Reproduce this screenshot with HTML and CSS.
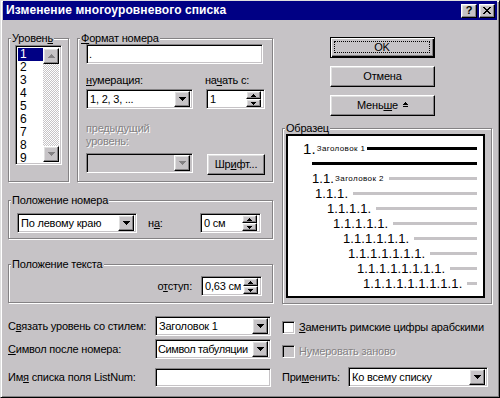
FILE: index.html
```html
<!DOCTYPE html>
<html lang="ru">
<head>
    <meta charset="UTF-8">
    <title>Изменение многоуровневого списка</title>
    <link rel="stylesheet" href="styles.css">
</head>
<body>
<div class="window">
    <div class="titlebar">
        <span class="title">Изменение многоуровневого списка</span>
        <div class="tbtn">?</div>
        <div class="tbtn">
            <svg width="8" height="7" viewBox="0 0 8 7"><path d="M0 0h2v1H0zM1 1h2v1H1zM2 2h4v1H2zM3 3h2v1H3zM2 4h4v1H2zM1 5h2v1H1zM0 6h2v1H0zM6 0h2v1H6zM5 1h2v1H5zM5 5h2v1H5zM6 6h2v1H6z" fill="#000"/></svg>
        </div>
    </div>

    <div class="dlg">
        <!-- левая часть -->
        <div class="col-left">
            <div class="row-top">
                <fieldset class="group g-level">
                    <legend>Уровен<u>ь</u></legend>
                    <div class="listbox">
                        <ul class="items">
                            <li class="sel">1</li>
                            <li>2</li>
                            <li>3</li>
                            <li>4</li>
                            <li>5</li>
                            <li>6</li>
                            <li>7</li>
                            <li>8</li>
                            <li>9</li>
                        </ul>
                        <div class="vscroll">
                            <div class="btn sbtn"><svg width="7" height="4" viewBox="0 0 7 4" class="dis"><path d="M3 0h1v1H3zM2 1h3v1H2zM1 2h5v1H1zM0 3h7v1H0z"/></svg></div>
                            <div class="track"></div>
                            <div class="btn sbtn"><svg width="7" height="4" viewBox="0 0 7 4" class="dis"><path d="M0 0h7v1H0zM1 1h5v1H1zM2 2h3v1H2zM3 3h1v1H3z"/></svg></div>
                        </div>
                    </div>
                </fieldset>

                <fieldset class="group g-format">
                    <legend><u>Ф</u>ормат номера</legend>
                    <div class="field fmt-input">.</div>
                    <div class="fmt-grid">
                        <span class="lbl"><u>н</u>умерация:</span>
                        <span class="lbl start-lbl">на<u>ч</u>ать с:</span>
                        <div class="field combo"><span class="val">1, 2, 3, ...</span><div class="btn arrow"><svg width="7" height="4" viewBox="0 0 7 4"><path d="M0 0h7v1H0zM1 1h5v1H1zM2 2h3v1H2zM3 3h1v1H3z"/></svg></div></div>
                        <div class="field spin"><span class="val">1</span>
                            <div class="spin-btns">
                                <div class="btn sp"><svg width="5" height="3" viewBox="0 0 5 3"><path d="M2 0h1v1H2zM1 1h3v1H1zM0 2h5v1H0z"/></svg></div>
                                <div class="btn sp"><svg width="5" height="3" viewBox="0 0 5 3"><path d="M0 0h5v1H0zM1 1h3v1H1zM2 2h1v1H2z"/></svg></div>
                            </div>
                        </div>
                        <span class="lbl disabled prev-lbl">предыдущий<br>уровень:</span>
                        <div class="field combo off"><span class="val"></span><div class="btn arrow"><svg width="7" height="4" viewBox="0 0 7 4" class="dis"><path d="M0 0h7v1H0zM1 1h5v1H1zM2 2h3v1H2zM3 3h1v1H3z"/></svg></div></div>
                        <div class="btn push font-btn">Шр<u>и</u>фт...</div>
                    </div>
                </fieldset>
            </div>

            <fieldset class="group g-numpos">
                <legend>Положение номера</legend>
                <div class="pos-row">
                    <div class="field combo align-combo"><span class="val">По левому краю</span><div class="btn arrow"><svg width="7" height="4" viewBox="0 0 7 4"><path d="M0 0h7v1H0zM1 1h5v1H1zM2 2h3v1H2zM3 3h1v1H3z"/></svg></div></div>
                    <span class="lbl at-lbl">н<u>а</u>:</span>
                    <div class="field spin"><span class="val">0 см</span>
                        <div class="spin-btns">
                            <div class="btn sp"><svg width="5" height="3" viewBox="0 0 5 3"><path d="M2 0h1v1H2zM1 1h3v1H1zM0 2h5v1H0z"/></svg></div>
                            <div class="btn sp"><svg width="5" height="3" viewBox="0 0 5 3"><path d="M0 0h5v1H0zM1 1h3v1H1zM2 2h1v1H2z"/></svg></div>
                        </div>
                    </div>
                </div>
            </fieldset>

            <fieldset class="group g-textpos">
                <legend>Положение текста</legend>
                <div class="pos-row indent-row">
                    <span class="lbl">о<u>т</u>ступ:</span>
                    <div class="field spin"><span class="val">0,63 см</span>
                        <div class="spin-btns">
                            <div class="btn sp"><svg width="5" height="3" viewBox="0 0 5 3"><path d="M2 0h1v1H2zM1 1h3v1H1zM0 2h5v1H0z"/></svg></div>
                            <div class="btn sp"><svg width="5" height="3" viewBox="0 0 5 3"><path d="M0 0h5v1H0zM1 1h3v1H1zM2 2h1v1H2z"/></svg></div>
                        </div>
                    </div>
                </div>
            </fieldset>
        </div>

        <!-- правая часть -->
        <div class="col-right">
            <div class="btns">
                <div class="btn push default"><span class="focus">OK</span></div>
                <div class="btn push">Отмена</div>
                <div class="btn push">Мень<u>ш</u>е <svg width="5" height="5" viewBox="0 0 5 5" class="less"><path d="M2 0h1v1H2zM1 1h3v1H1zM0 2h5v1H0zM0 4h5v1H0z"/></svg></div>
            </div>
            <fieldset class="group g-sample">
                <legend>Образец</legend>
                <div class="sample">
                    <div class="srow lv0"><span class="num big">1.</span><span class="cap">Заголовок 1</span><i class="bar dark"></i></div>
                    <div class="srow lv1"><i class="bar dark first"></i></div>
                    <div class="srow lv1"><span class="num">1.1.</span><span class="cap">Заголовок 2</span><i class="bar"></i></div>
                    <div class="srow lv2"><span class="num">1.1.1.</span><i class="bar"></i></div>
                    <div class="srow lv3"><span class="num">1.1.1.1.</span><i class="bar"></i></div>
                    <div class="srow lv4"><span class="num">1.1.1.1.1.</span><i class="bar"></i></div>
                    <div class="srow lv5"><span class="num">1.1.1.1.1.1.</span><i class="bar"></i></div>
                    <div class="srow lv6"><span class="num">1.1.1.1.1.1.1.</span><i class="bar"></i></div>
                    <div class="srow lv7"><span class="num">1.1.1.1.1.1.1.1.</span><i class="bar"></i></div>
                    <div class="srow lv8"><span class="num">1.1.1.1.1.1.1.1.1.</span><i class="bar"></i></div>
                </div>
            </fieldset>
        </div>

        <!-- нижние строки -->
        <div class="bottom-left">
            <div class="brow r1">
                <span class="lbl">С<u>в</u>язать уровень со стилем:</span>
                <div class="field combo wide"><span class="val">Заголовок 1</span><div class="btn arrow"><svg width="7" height="4" viewBox="0 0 7 4"><path d="M0 0h7v1H0zM1 1h5v1H1zM2 2h3v1H2zM3 3h1v1H3z"/></svg></div></div>
            </div>
            <div class="brow r2">
                <span class="lbl"><u>С</u>имвол после номера:</span>
                <div class="field combo wide"><span class="val tight">Символ табуляции</span><div class="btn arrow"><svg width="7" height="4" viewBox="0 0 7 4"><path d="M0 0h7v1H0zM1 1h5v1H1zM2 2h3v1H2zM3 3h1v1H3z"/></svg></div></div>
            </div>
            <div class="brow r3">
                <span class="lbl">Им<u>я</u> списка поля ListNum:</span>
                <div class="field wide listnum"></div>
            </div>
        </div>
        <div class="bottom-right">
            <div class="chk-row"><span class="field chk"></span><span class="lbl"><u>З</u>аменить римские цифры арабскими</span></div>
            <div class="chk-row r2"><span class="field chk off"></span><span class="lbl disabled">Нумеровать заново</span></div>
            <div class="apply-row">
                <span class="lbl">При<u>м</u>енить:</span>
                <div class="field combo apply"><span class="val">Ко всему списку</span><div class="btn arrow"><svg width="7" height="4" viewBox="0 0 7 4"><path d="M0 0h7v1H0zM1 1h5v1H1zM2 2h3v1H2zM3 3h1v1H3z"/></svg></div></div>
            </div>
        </div>
    </div>
</div>
</body>
</html>
```

FILE: styles.css
```css
* {
    box-sizing: border-box;
}

body {
    margin: 0;
    font-family: "Liberation Sans", Arial, sans-serif;
    font-size: 11px;
    line-height: 13px;
    letter-spacing: -0.2px;
    color: #000;
}

u {
    text-decoration: underline;
    text-underline-offset: 1px;
}

.window {
    width: 500px;
    height: 398px;
    background: #c6c3c6;
    border: 1px solid;
    border-color: #dfdfdf #000 #000 #dfdfdf;
    box-shadow: inset 1px 1px #fff, inset -1px -1px #848284;
    padding: 0 2px 2px 2px;
}

/* заголовок окна */
.titlebar {
    height: 19px;
    background: #000084;
    display: flex;
    align-items: center;
    padding: 0 2px 0 3px;
    gap: 2px;
}

.title {
    flex: 1;
    color: #fff;
    font-weight: bold;
    font-size: 12px;
    letter-spacing: 0.1px;
}

.tbtn {
    width: 16px;
    height: 14px;
    background: #c6c3c6;
    border: 1px solid;
    border-color: #fff #000 #000 #fff;
    box-shadow: inset -1px -1px #848284, inset 1px 1px #dfdfdf;
    display: flex;
    align-items: center;
    justify-content: center;
    font-weight: bold;
    font-size: 11px;
}

/* общие элементы */
.btn {
    background: #c6c3c6;
    border: 1px solid;
    border-color: #fff #000 #000 #fff;
    box-shadow: inset -1px -1px #848284, inset 1px 1px #dfdfdf;
    display: flex;
    align-items: center;
    justify-content: center;
}

.field {
    background: #fff;
    border: 1px solid;
    border-color: #848284 #fff #fff #848284;
    box-shadow: inset 1px 1px #000, inset -1px -1px #c6c3c6;
    height: 20px;
    display: flex;
    align-items: center;
    padding: 2px;
}

.field .val {
    flex: 1;
    padding-left: 1px;
    white-space: nowrap;
    overflow: hidden;
}

.field .val.tight {
    letter-spacing: -0.4px;
    padding-left: 0;
}

.field.off {
    background: #c6c3c6;
}

.combo .arrow {
    width: 16px;
    height: 16px;
}

.spin-btns {
    width: 15px;
    height: 16px;
    display: flex;
    flex-direction: column;
    margin-right: 1px;
}

.spin-btns .sp {
    height: 8px;
}

svg path {
    fill: #000;
}

svg.dis path {
    fill: #848284;
}

.lbl {
    white-space: nowrap;
}

.disabled {
    color: #848284;
    text-shadow: 1px 1px #fff;
}

/* группы */
.group {
    margin: 0;
    padding: 0;
    min-width: 0;
    border: 1px solid #848284;
    box-shadow: 1px 1px 0 #fff, inset 1px 1px 0 #fff;
}

.group legend {
    margin-left: 2px;
    padding: 0 1px;
    background: #c6c3c6;
    line-height: 13px;
}

/* раскладка диалога */
.dlg {
    display: grid;
    grid-template-columns: 265px 210px;
    column-gap: 9px;
    padding: 12px 0 0 5px;
}

.row-top {
    display: flex;
    gap: 8px;
}

.g-level {
    width: 61px;
    height: 150px;
}

.listbox {
    margin: 0 0 0 6px;
    width: 47px;
    height: 120px;
    background: #fff;
    border: 1px solid;
    border-color: #848284 #fff #fff #848284;
    box-shadow: inset 1px 1px #000, inset -1px -1px #c6c3c6;
    padding: 2px;
    display: flex;
}

.items {
    list-style: none;
    margin: 0;
    padding: 0;
    flex: 1;
}

.items li {
    height: 13px;
    line-height: 13px;
    padding-left: 2px;
    font-size: 12px;
}

.items li.sel {
    background: #000084;
    color: #fff;
}

.vscroll {
    width: 16px;
    display: flex;
    flex-direction: column;
}

.sbtn {
    height: 16px;
}

.track {
    flex: 1;
    background: repeating-conic-gradient(#fff 0 25%, #c6c3c6 0 50%) 0 0 / 2px 2px;
}

.g-format {
    width: 196px;
    height: 150px;
}

.fmt-input {
    margin: -1px 0 0 8px;
    width: 177px;
}

.fmt-grid {
    display: grid;
    grid-template-columns: 107px 59px;
    column-gap: 13px;
    margin-left: 8px;
    margin-top: 10px;
}

.start-lbl {
    margin-left: -1px;
}

.fmt-grid .combo,
.fmt-grid .spin {
    margin-top: 2px;
}

.prev-lbl {
    grid-column: 1 / 3;
    margin-top: 13px;
}

.fmt-grid .off {
    margin-top: 5px;
}

.font-btn {
    height: 21px;
    margin-top: 6px;
    margin-left: 1px;
}

.g-numpos {
    margin-top: 12px;
    height: 45px;
}

.pos-row {
    display: flex;
    align-items: center;
    margin: 6px 0 0 8px;
}

.align-combo {
    width: 120px;
}

.at-lbl {
    margin-left: 11px;
    width: 52px;
}

.pos-row .spin {
    width: 61px;
}

.g-textpos {
    margin-top: 19px;
    height: 45px;
}

.indent-row {
    justify-content: flex-end;
    gap: 9px;
    margin-top: 5px;
    padding-right: 10px;
}

/* правая колонка */
.btns {
    display: flex;
    flex-direction: column;
    gap: 8px;
    margin: 5px 0 0 48px;
    width: 105px;
}

.push {
    height: 21px;
}

.push svg {
    margin-left: 5px;
    margin-bottom: 2px;
}

.btn.default {
    border: 1px solid #000;
    box-shadow: inset 1px 1px #fff, inset -1px -1px #000, inset -2px -2px #848284;
    padding: 3px 4px 4px 3px;
}

.focus {
    flex: 1;
    align-self: stretch;
    border: 1px dotted #000;
    display: flex;
    align-items: center;
    justify-content: center;
}

.g-sample {
    margin-top: 6px;
    height: 182px;
}

.sample {
    margin: -1px 6px 0 3px;
    height: 164px;
    background: #fff;
    border: 2px solid #000;
    padding-top: 5px;
    letter-spacing: 0;
}

.srow {
    display: flex;
    align-items: center;
    height: 15px;
    padding-right: 6px;
}

.num {
    font-size: 13px;
    letter-spacing: 0.1px;
    white-space: nowrap;
}

.num.big {
    font-size: 15px;
}

.cap {
    font-size: 8px;
    letter-spacing: 0.4px;
    margin-left: 1px;
    white-space: nowrap;
}

.bar {
    flex: 1;
    height: 3px;
    background: #c6c3c6;
    margin-left: 5px;
}

.bar.dark {
    background: #000;
    margin-left: 2px;
}

.bar.first {
    margin-left: 0;
}

.lv0 { padding-left: 15px; }
.lv1 { padding-left: 24px; }
.lv2 { padding-left: 27px; }
.lv3 { padding-left: 39px; }
.lv4 { padding-left: 45px; }
.lv5 { padding-left: 55px; }
.lv6 { padding-left: 60px; }
.lv7 { padding-left: 69px; }
.lv8 { padding-left: 75px; }

/* нижние строки */
.bottom-left {
    margin-top: 12px;
}

.brow {
    display: flex;
    align-items: center;
    justify-content: space-between;
    padding-right: 2px;
}

.brow.r2 {
    margin-top: 3px;
}

.brow.r3 {
    margin-top: 9px;
}

.wide {
    width: 116px;
}

.listnum {
    height: 19px;
}

.bottom-right {
    margin-top: 17px;
}

.chk-row {
    display: flex;
    align-items: center;
    gap: 4px;
}

.chk-row.r2 {
    margin-top: 11px;
}

.chk {
    width: 13px;
    height: 13px;
}

.apply-row {
    display: flex;
    align-items: center;
    justify-content: space-between;
    margin-top: 9px;
    padding-right: 4px;
}

.apply {
    width: 140px;
}
```
